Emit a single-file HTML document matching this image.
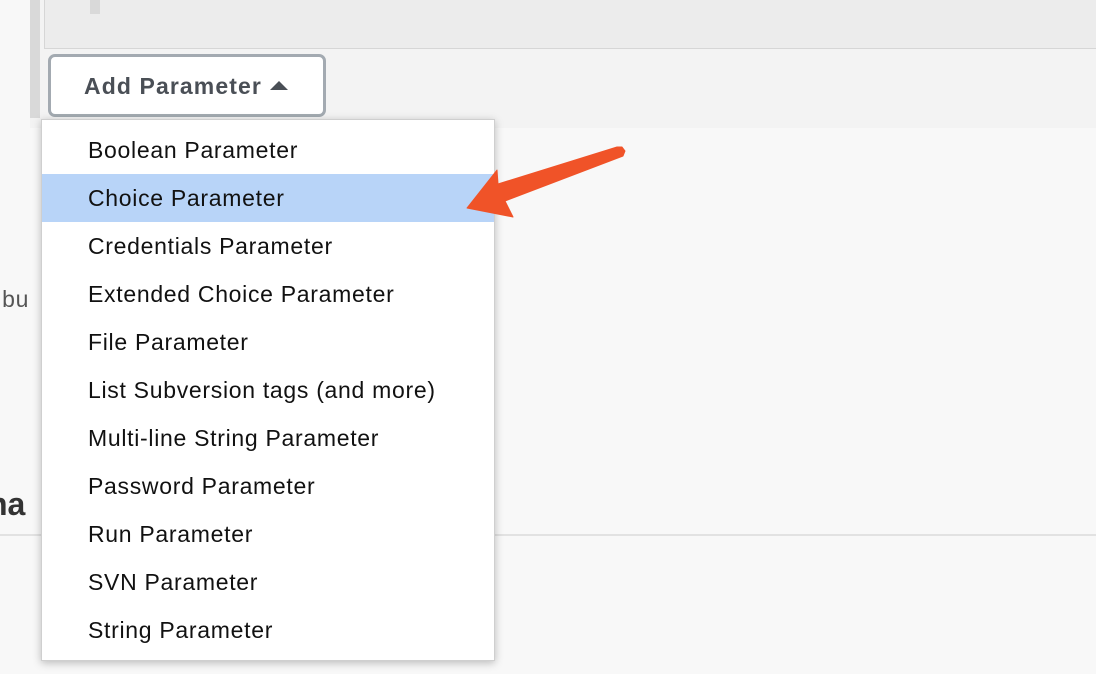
<!DOCTYPE html>
<html><head><meta charset="utf-8"><style>
*{margin:0;padding:0;box-sizing:border-box}
body{width:1096px;height:674px;overflow:hidden;background:#f8f8f8;position:relative;font-family:"Liberation Sans",Arial,sans-serif}
.top{position:absolute;left:0;top:0;width:1096px;height:128px;background:#f3f3f3}
.lcol{position:absolute;left:0;top:0;width:30px;height:128px;background:#f8f8f8}
.bar{position:absolute;left:30px;top:0;width:10px;height:118px;background:#d9d9d9}
.box{position:absolute;left:44px;top:-2px;width:1060px;height:51px;background:#ececec;border:1px solid #d6d6d6}
.blk{position:absolute;left:90px;top:0;width:10px;height:14px;background:#d9d9d9}
.btn{position:absolute;left:48px;top:54px;width:278px;height:63px;background:#fff;border:3px solid #a3aab1;border-radius:7px;font-weight:bold;font-size:23px;color:#4a4f56;padding:16px 0 0 33px;letter-spacing:1.1px}
.btn i{display:inline-block;width:0;height:0;border-left:9px solid transparent;border-right:9px solid transparent;border-bottom:9px solid #4a4f56;margin-left:8px;vertical-align:4px}
.hr{position:absolute;left:0;top:534px;width:1096px;height:2px;background:#e2e2e2}
.bu{position:absolute;left:-12px;top:286px;font-size:23px;color:#555;letter-spacing:.7px}
.na{position:absolute;left:-12px;top:486px;font-size:32px;font-weight:bold;color:#333}
.menu{position:absolute;left:41px;top:119px;width:454px;height:542px;background:#fff;border:1px solid #cfcfcf;box-shadow:0 2px 8px rgba(0,0,0,.25);padding-top:6px}
.menu div{height:48px;line-height:48px;padding-left:46px;font-size:23px;color:#111;letter-spacing:.7px;white-space:nowrap}
.menu .h{background:#b8d4f8}
svg{position:absolute;left:0;top:0}
</style></head><body>
<div class="top"></div><div class="lcol"></div><div class="bar"></div><div class="box"></div><div class="blk"></div>
<div class="btn">Add Parameter<i></i></div>
<div class="bu">t bu</div>
<div class="na">na</div>
<div class="hr"></div>
<div class="menu">
<div>Boolean Parameter</div>
<div class="h">Choice Parameter</div>
<div>Credentials Parameter</div>
<div>Extended Choice Parameter</div>
<div>File Parameter</div>
<div>List Subversion tags (and more)</div>
<div>Multi-line String Parameter</div>
<div>Password Parameter</div>
<div>Run Parameter</div>
<div>SVN Parameter</div>
<div>String Parameter</div>
</div>
<svg width="1096" height="674"><polygon fill="#f05328" stroke="#f05328" stroke-width="1" stroke-linejoin="round" points="467,208 497,170 498,184 617,147 622,147 625,151 623,156 505,201 513,217"/></svg>
</body></html>
